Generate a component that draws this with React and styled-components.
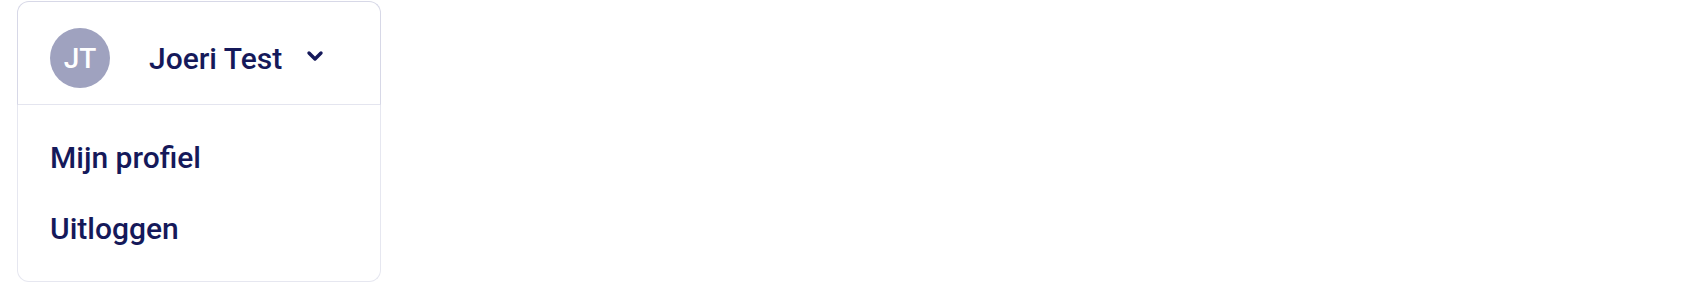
import React from 'react'
import styled, { createGlobalStyle } from 'styled-components'

const NAVY = '#15195a'

const GlobalStyle = createGlobalStyle`
  html, body {
    margin: 0;
    padding: 0;
    background: #fff;
    font-family: Roboto, "Noto Sans", sans-serif;
  }
`

const Page = styled.div`
  padding: 1px 0 0 17px;
`

const Card = styled.div`
  width: 364px;
  display: flex;
  flex-direction: column;
  background: #fff;
`

const Header = styled.div`
  height: 102px;
  padding: 0 32px;
  display: flex;
  align-items: center;
  border: 1px solid #d7d8e7;
  border-bottom: 1px solid #e4e5ef;
  border-radius: 12px 12px 0 0;
  box-sizing: content-box;
`

const HeaderInner = styled.div`
  display: flex;
  align-items: center;
  margin-top: 10px;
`

const Avatar = styled.div`
  width: 60px;
  height: 60px;
  border-radius: 50%;
  background: #9fa2bf;
  color: #fff;
  display: flex;
  align-items: center;
  justify-content: center;
  font-size: 28px;
  font-weight: 500;
  flex-shrink: 0;
`

const Name = styled.div`
  margin-left: 39px;
  font-size: 30px;
  font-weight: 500;
  color: ${NAVY};
`

const Chevron = styled.svg`
  margin: 0 0 4px 24px;
  width: 18px;
  height: 12px;
`

const Menu = styled.div`
  padding: 16px 0 18px;
  display: flex;
  flex-direction: column;
  border: 1px solid #e6e7f0;
  border-top: none;
  border-radius: 0 0 12px 12px;
`

const MenuItem = styled.div`
  padding: 15px 32px 13px;
  line-height: 43px;
  font-size: 30px;
  font-weight: 500;
  color: ${NAVY};
  cursor: pointer;
`

export default function App() {
  return (
    <Page>
      <GlobalStyle />
      <Card>
        <Header>
          <HeaderInner>
            <Avatar>JT</Avatar>
            <Name>Joeri Test</Name>
            <Chevron viewBox="0 0 18 12">
              <polyline
                points="3,3 9,9 15,3"
                fill="none"
                stroke={NAVY}
                strokeWidth="3.4"
                strokeLinecap="round"
                strokeLinejoin="round"
              />
            </Chevron>
          </HeaderInner>
        </Header>
        <Menu>
          <MenuItem>Mijn profiel</MenuItem>
          <MenuItem>Uitloggen</MenuItem>
        </Menu>
      </Card>
    </Page>
  )
}
